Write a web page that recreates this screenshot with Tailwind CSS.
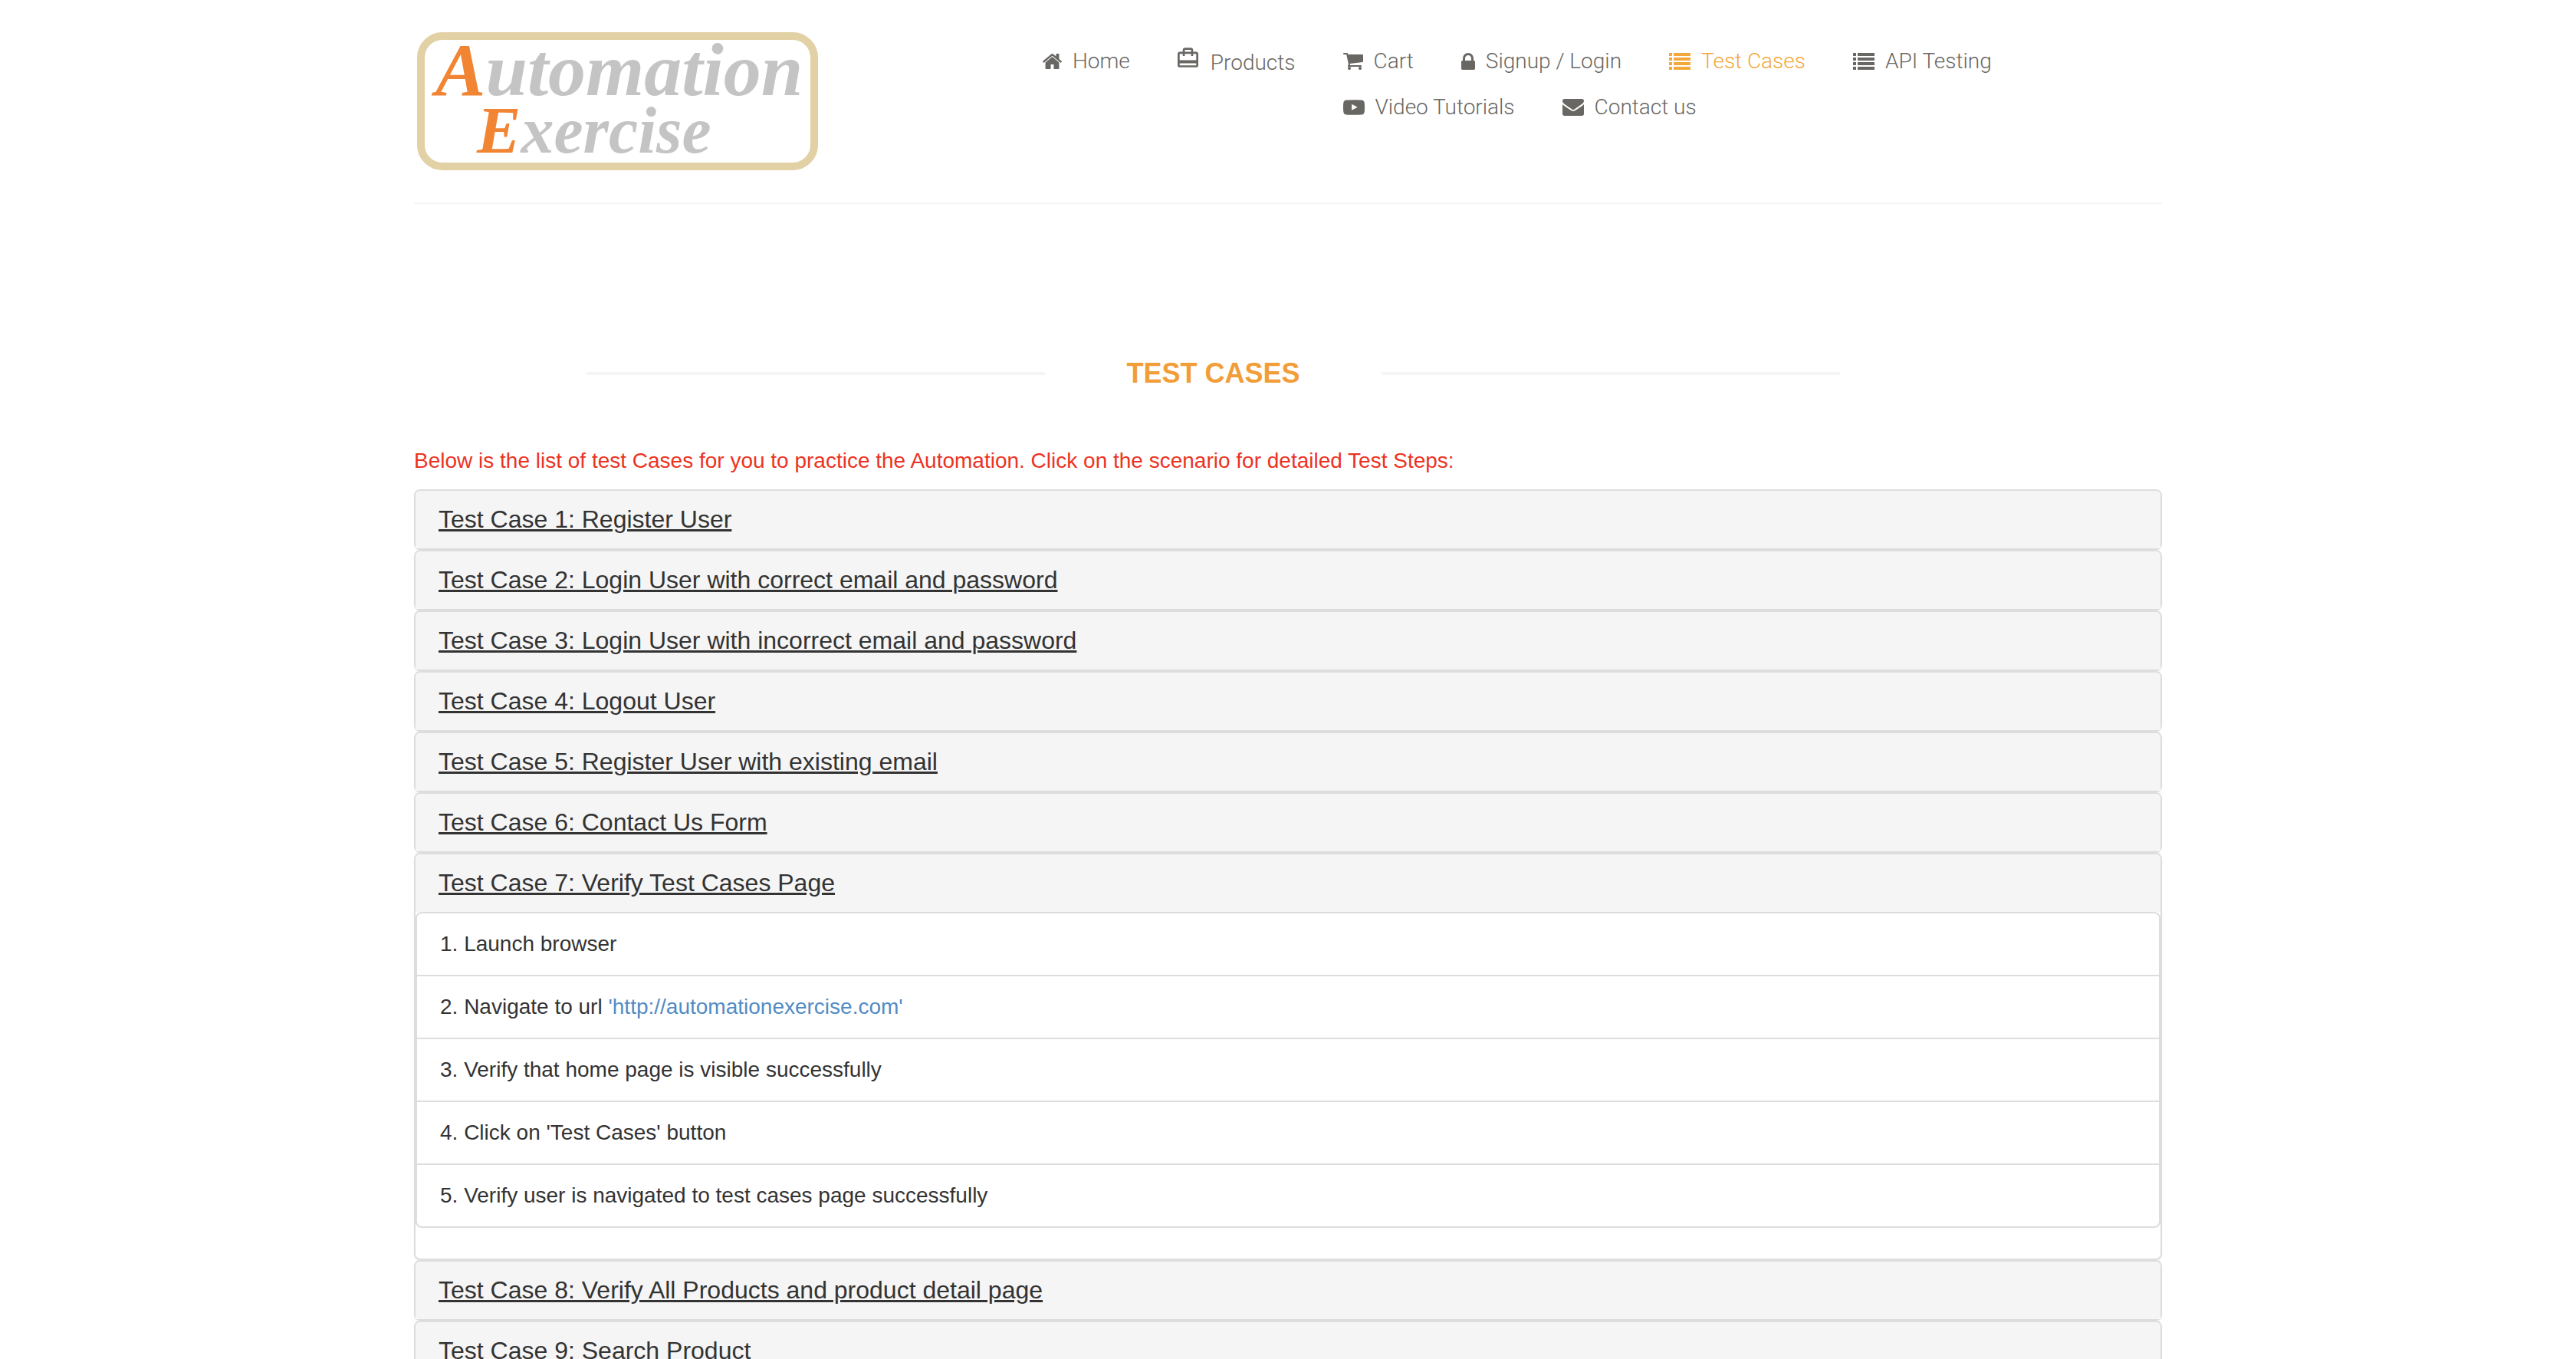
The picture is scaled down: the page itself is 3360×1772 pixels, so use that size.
<!DOCTYPE html>
<html lang="en">
<head>
<meta charset="utf-8">
<title>Automation Practice Website for UI Testing - Test Cases</title>
<script src="https://cdn.jsdelivr.net/npm/@tailwindcss/browser@4"></script>
</head>
<body class="bg-white font-['Liberation_Sans',Arial,sans-serif] text-[28px] leading-[40px] text-[#333]">

<header class="mx-auto max-w-[2340px] px-[30px]">
  <div class="flex items-start border-b-2 border-[#f5f5f5] py-10">
    <a href="#" aria-label="Automation Exercise" class="shrink-0">
      <svg class="block h-[184px] w-[528px] overflow-visible" viewBox="0 0 528 184">
        <rect x="9" y="7" width="513" height="170" rx="28" fill="#fff" stroke="#e2d1a5" stroke-width="10"/>
        <text x="28" y="84" class="fill-[#c4c4c4] font-['Liberation_Serif',serif] text-[98px] leading-none font-bold italic"><tspan class="fill-[#f28533]">A</tspan>utomation</text>
        <text x="82" y="159" class="fill-[#c4c4c4] font-['Liberation_Serif',serif] text-[86px] leading-none font-bold italic"><tspan class="fill-[#f28533]">E</tspan>xercise</text>
      </svg>
    </a>
    <nav class="mt-5 ml-[292px] min-w-0 flex-1 font-['Roboto',sans-serif] font-light text-[#696763]">
      <ul>
        <li class="float-left mr-[62px] h-[60px]">
          <a href="#" class="flex items-center gap-[14px]">
            <svg class="h-[20px] w-[25px] fill-current" viewBox="90 256 1612 1280"><path d="M1472 992v480q0 26-19 45t-45 19h-384v-384h-256v384h-384q-26 0-45-19t-19-45v-480q0-1 .5-3t.5-3l575-474 575 474q1 2 1 6zm223-69l-62 74q-8 9-21 11h-3q-13 0-21-7l-692-577-692 577q-12 8-24 7-13-2-21-11l-62-74q-8-10-7-23.500t11-21.500l719-599q32-26 76-26t76 26l244 204v-195q0-14 9-23t23-9h192q14 0 23 9t9 23v408l219 182q10 8 11 21.500t-7 23.500z"/></svg>
            Home</a>
        </li>
        <li class="float-left mr-[62px] h-[64px] pt-[2px]">
          <a href="#" class="flex items-center gap-4">
            <svg class="h-[26px] w-[27px] self-start fill-current" viewBox="2 2 20 19"><path d="M20 6h-3V4c0-1.110-.89-2-2-2H9c-1.110 0-2 .89-2 2v2H4c-1.110 0-2 .89-2 2v11c0 1.110.89 2 2 2h16c1.110 0 2-.89 2-2V8c0-1.110-.89-2-2-2zM9 4h6v2H9V4zm11 15H4v-2h16v2zm0-5H4V8h3v2h2V8h6v2h2V8h3v6z"/></svg>
            Products</a>
        </li>
        <li class="float-left mr-[62px] h-[60px]">
          <a href="#" class="flex items-center gap-[14px]">
            <svg class="h-[22px] w-[26px] fill-current" viewBox="64 256 1664 1408"><path d="M704 1536q0 52-38 90t-90 38-90-38-38-90 38-90 90-38 90 38 38 90zm896 0q0 52-38 90t-90 38-90-38-38-90 38-90 90-38 90 38 38 90zm128-1088v512q0 24-16.500 42.500t-40.500 21.500l-1044 122q13 60 13 70 0 16-24 64h920q26 0 45 19t19 45-19 45-45 19h-1024q-26 0-45-19t-19-45q0-11 8-31.500t16-36 21.500-40 15.500-29.500l-177-823h-204q-26 0-45-19t-19-45 19-45 45-19h256q16 0 28.500 6.500t19.500 15.500 13 24.500 8 26 5.500 29.500 4.500 26h1201q26 0 45 19t19 45z"/></svg>
            Cart</a>
        </li>
        <li class="float-left mr-[62px] h-[60px]">
          <a href="#" class="flex items-center gap-[14px]">
            <svg class="h-[22px] w-[18px] fill-current" viewBox="320 128 1152 1408"><path d="M640 768h512v-192q0-106-75-181t-181-75-181 75-75 181v192zm832 96v576q0 40-28 68t-68 28h-960q-40 0-68-28t-28-68v-576q0-40 28-68t68-28h32v-192q0-184 132-316t316-132 316 132 132 316v192h32q40 0 68 28t28 68z"/></svg>
            Signup / Login</a>
        </li>
        <li class="float-left mr-[62px] h-[60px] text-[#f2a83b]">
          <a href="#" class="flex items-center gap-[14px]">
            <svg class="h-[22px] w-[28px] fill-current" viewBox="0 0 28 22"><path d="M0 0h4v4H0zM6 0h22v4H6zM0 6h4v4H0zM6 6h22v4H6zM0 12h4v4H0zM6 12h22v4H6zM0 18h4v4H0zM6 18h22v4H6z"/></svg>
            Test Cases</a>
        </li>
        <li class="float-left mr-[62px] h-[60px]">
          <a href="#" class="flex items-center gap-[14px]">
            <svg class="h-[22px] w-[28px] fill-current" viewBox="0 0 28 22"><path d="M0 0h4v4H0zM6 0h22v4H6zM0 6h4v4H0zM6 6h22v4H6zM0 12h4v4H0zM6 12h22v4H6zM0 18h4v4H0zM6 18h22v4H6z"/></svg>
            API Testing</a>
        </li>
        <li class="float-left mr-[62px] h-[60px]">
          <a href="#" class="flex items-center gap-[14px]">
            <svg class="h-[20px] w-[28px] fill-current" viewBox="0 256 1792 1280"><path d="M711 1128l484-250-484-253v503zm185-862q168 0 324.500 4.500t229.500 9.500l73 4q1 0 17 1.500t23 3 23.500 4.500 28.500 8 28 13 31 19.500 29 26.500q6 6 15.500 18.500t29 58.500 26.500 101q8 64 12.500 136.500t5.500 113.500v176q1 145-18 290-7 55-25 99.500t-32 61.500l-14 17q-14 15-29 26.500t-31 19-28 12.500-28.500 8-24 4.500-23 3-16.500 1.500q-251 19-627 19-207-2-359.500-6.500t-200.500-7.500l-49-4-36-4q-36-5-54.500-10t-51-21-56.500-41q-6-6-15.500-18.500t-29-58.500-26.500-101q-8-64-12.500-136.500t-5.500-113.500v-176q-1-145 18-290 7-55 25-99.500t32-61.500l14-17q14-15 29-26.500t31-19.500 28-13 28.500-8 23.500-4.500 23-3 17-1.500q251-18 627-18z"/></svg>
            Video Tutorials</a>
        </li>
        <li class="float-left h-[60px]">
          <a href="#" class="flex items-center gap-[14px]">
            <svg class="h-[22px] w-[28px] fill-current" viewBox="0 256 1792 1408"><path d="M1792 710v794q0 66-47 113t-113 47h-1472q-66 0-113-47t-47-113v-794q44 49 101 87 362 246 497 345 57 42 92.500 65.500t94.500 48 110 24.500h2q51 0 110-24.500t94.500-48 92.500-65.500q170-123 498-345 57-39 100-87zm0-294q0 79-49 151t-122 123q-376 261-468 325-10 7-42.500 31t-54 38.500-52 32.500-57.500 27-50 9h-2q-23 0-50-9t-57.500-27-52-32.500-54-38.500-42.500-31q-91-64-262-182.500t-205-142.500q-62-42-117-115.500t-55-136.500q0-78 41.500-130t118.500-52h1472q65 0 112.500 47t47.500 113z"/></svg>
            Contact us</a>
        </li>
      </ul>
    </nav>
  </div>
</header>

<main class="mx-auto max-w-[2340px] px-[30px] pt-[201px]">
  <div class="mb-[74px] flex items-center gap-[106px] pr-[420px] pl-[225px]">
    <span class="h-1 flex-1 bg-[#f5f5f5]"></span>
    <h2 class="text-[36px] leading-[40px] font-bold text-[#f19e38] uppercase">Test Cases</h2>
    <span class="h-1 flex-1 bg-[#f5f5f5]"></span>
  </div>

  <p class="mb-[17px] text-[#eb3323]">Below is the list of test Cases for you to practice the Automation. Click on the scenario for detailed Test Steps:</p>

  <section class="rounded-lg border-2 border-[#ddd] bg-white shadow-[0_2px_2px_rgba(0,0,0,0.05)]">
    <h4 class="rounded-t-md bg-[#f5f5f5] px-[30px] py-5 text-[32px] leading-[35px]"><a href="#collapse1" class="underline decoration-[3px] underline-offset-2">Test Case 1: Register User</a></h4>
  </section>
  <section class="rounded-lg border-2 border-[#ddd] bg-white shadow-[0_2px_2px_rgba(0,0,0,0.05)]">
    <h4 class="rounded-t-md bg-[#f5f5f5] px-[30px] py-5 text-[32px] leading-[35px]"><a href="#collapse2" class="underline decoration-[3px] underline-offset-2">Test Case 2: Login User with correct email and password</a></h4>
  </section>
  <section class="rounded-lg border-2 border-[#ddd] bg-white shadow-[0_2px_2px_rgba(0,0,0,0.05)]">
    <h4 class="rounded-t-md bg-[#f5f5f5] px-[30px] py-5 text-[32px] leading-[35px]"><a href="#collapse3" class="underline decoration-[3px] underline-offset-2">Test Case 3: Login User with incorrect email and password</a></h4>
  </section>
  <section class="rounded-lg border-2 border-[#ddd] bg-white shadow-[0_2px_2px_rgba(0,0,0,0.05)]">
    <h4 class="rounded-t-md bg-[#f5f5f5] px-[30px] py-5 text-[32px] leading-[35px]"><a href="#collapse4" class="underline decoration-[3px] underline-offset-2">Test Case 4: Logout User</a></h4>
  </section>
  <section class="rounded-lg border-2 border-[#ddd] bg-white shadow-[0_2px_2px_rgba(0,0,0,0.05)]">
    <h4 class="rounded-t-md bg-[#f5f5f5] px-[30px] py-5 text-[32px] leading-[35px]"><a href="#collapse5" class="underline decoration-[3px] underline-offset-2">Test Case 5: Register User with existing email</a></h4>
  </section>
  <section class="rounded-lg border-2 border-[#ddd] bg-white shadow-[0_2px_2px_rgba(0,0,0,0.05)]">
    <h4 class="rounded-t-md bg-[#f5f5f5] px-[30px] py-5 text-[32px] leading-[35px]"><a href="#collapse6" class="underline decoration-[3px] underline-offset-2">Test Case 6: Contact Us Form</a></h4>
  </section>
  <section class="rounded-lg border-2 border-[#ddd] bg-white shadow-[0_2px_2px_rgba(0,0,0,0.05)]">
    <h4 class="rounded-t-md bg-[#f5f5f5] px-[30px] py-5 text-[32px] leading-[35px]"><a href="#collapse7" class="underline decoration-[3px] underline-offset-2">Test Case 7: Verify Test Cases Page</a></h4>
    <ul id="collapse7" class="mb-10 divide-y-2 divide-[#ddd] rounded-lg border-2 border-[#ddd]">
      <li class="px-[30px] py-5">1. Launch browser</li>
      <li class="px-[30px] py-5">2. Navigate to url <a href="http://automationexercise.com" class="text-[#528bc5]">'http://automationexercise.com'</a></li>
      <li class="px-[30px] py-5">3. Verify that home page is visible successfully</li>
      <li class="px-[30px] py-5">4. Click on 'Test Cases' button</li>
      <li class="px-[30px] py-5">5. Verify user is navigated to test cases page successfully</li>
    </ul>
  </section>
  <section class="rounded-lg border-2 border-[#ddd] bg-white shadow-[0_2px_2px_rgba(0,0,0,0.05)]">
    <h4 class="rounded-t-md bg-[#f5f5f5] px-[30px] py-5 text-[32px] leading-[35px]"><a href="#collapse8" class="underline decoration-[3px] underline-offset-2">Test Case 8: Verify All Products and product detail page</a></h4>
  </section>
  <section class="rounded-lg border-2 border-[#ddd] bg-white shadow-[0_2px_2px_rgba(0,0,0,0.05)]">
    <h4 class="rounded-t-md bg-[#f5f5f5] px-[30px] py-5 text-[32px] leading-[35px]"><a href="#collapse9" class="underline decoration-[3px] underline-offset-2">Test Case 9: Search Product</a></h4>
  </section>
</main>
</body>
</html>
